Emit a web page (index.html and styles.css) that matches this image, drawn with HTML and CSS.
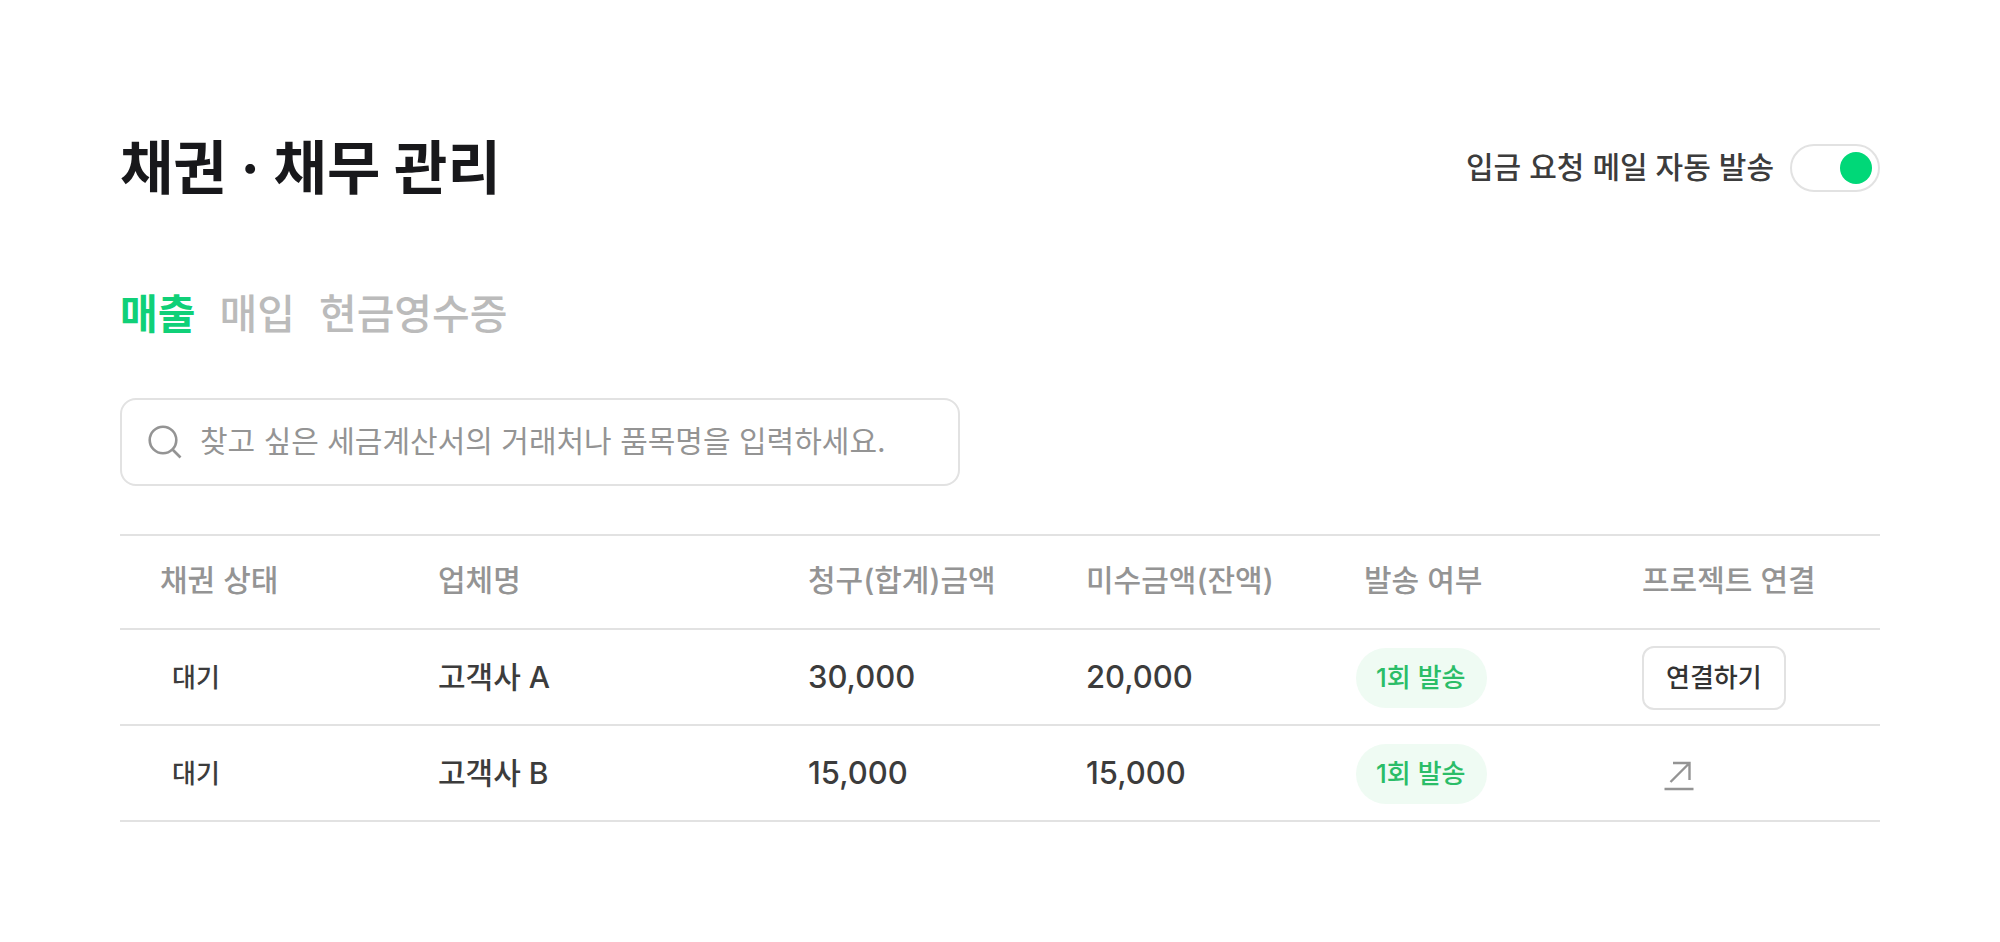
FILE: index.html
```html
<!DOCTYPE html>
<html lang="ko">
<head>
<meta charset="utf-8">
<meta name="viewport" content="width=device-width, initial-scale=1">
<title>채권 · 채무 관리</title>
<link rel="stylesheet" href="styles.css">
</head>
<body>
<main class="page">
  <header class="header">
    <h1 class="title">채권 · 채무 관리</h1>
    <label class="auto-send">
      <span class="auto-send-text">입금 요청 메일 자동 발송</span>
      <input class="switch" type="checkbox" role="switch" checked>
    </label>
  </header>
  <nav class="tabs">
    <button class="tab tab-active" type="button">매출</button>
    <button class="tab" type="button">매입</button>
    <button class="tab" type="button">현금영수증</button>
  </nav>
  <label class="search">
    <svg class="search-icon" viewBox="0 0 34 34" aria-hidden="true"><circle cx="15" cy="15" r="13.3"/><path d="M24.5 24.5l8 8"/></svg>
    <input class="search-input" type="text" aria-label="세금계산서 검색" placeholder="찾고 싶은 세금계산서의 거래처나 품목명을 입력하세요.">
  </label>
  <table class="table">
    <colgroup><col class="col-status"><col class="col-name"><col class="col-amount"><col class="col-amount"><col class="col-amount"><col></colgroup>
    <thead>
      <tr><th>채권 상태</th><th>업체명</th><th>청구(합계)금액</th><th>미수금액(잔액)</th><th>발송 여부</th><th>프로젝트 연결</th></tr>
    </thead>
    <tbody>
      <tr>
        <td class="status">대기</td><td>고객사 A</td><td class="amount">30,000</td><td class="amount">20,000</td>
        <td class="sent"><span class="badge">1회 발송</span></td>
        <td class="link"><button class="connect" type="button">연결하기</button></td>
      </tr>
      <tr>
        <td class="status">대기</td><td>고객사 B</td><td class="amount">15,000</td><td class="amount">15,000</td>
        <td class="sent"><span class="badge">1회 발송</span></td>
        <td><a class="open" href="#" aria-label="프로젝트 열기"><svg class="open-icon" viewBox="0 0 30 30" aria-hidden="true"><path d="M6.5 21L25 2.5M9 2h16.5v17M.5 28h29"/></svg></a></td>
      </tr>
    </tbody>
  </table>
</main>
</body>
</html>
```

FILE: styles.css
```css
* { box-sizing: border-box; }
body {
  margin: 0;
  background: #fff;
  color: #3c3c3c;
  font-family: Inter, "Noto Sans CJK KR", sans-serif;
}
button, input { font: inherit; }
.page { padding: 128px 120px; }
.header { display: flex; align-items: center; justify-content: space-between; }
.title { margin: 0; font-size: 58px; line-height: 80px; font-weight: 700; color: #18181b; }
.auto-send { display: flex; align-items: center; gap: 16px; font-size: 30px; font-weight: 500; line-height: 44px; }
.auto-send-text { padding-bottom: 2px; }
.switch {
  appearance: none;
  display: flex; align-items: center; justify-content: flex-end;
  width: 90px; height: 48px; margin: 0; padding: 0 6px;
  border: 2px solid #e2e2e2; border-radius: 24px;
}
.switch::before { content: ""; width: 32px; height: 32px; border-radius: 50%; background: #00d878; }
.switch:not(:checked) { justify-content: flex-start; }
.switch:not(:checked)::before { background: #bbb; }
.tabs { display: flex; gap: 24px; margin-top: 76px; }
.tab { padding: 0; border: 0; background: none; color: #bbb; font-size: 41px; line-height: 60px; font-weight: 500; }
.tab-active { color: #10d078; font-weight: 700; }
.search {
  display: flex; align-items: center; gap: 18px;
  width: 840px; max-width: 100%; height: 88px; margin-top: 54px; padding: 0 26px;
  border: 2px solid #e2e2e2; border-radius: 16px;
}
.search-icon { flex: none; width: 34px; height: 34px; fill: none; stroke: #949494; stroke-width: 2.6; }
.search-input { flex: 1; min-width: 0; padding: 0 0 2px; border: 0; outline: 0; font-size: 30px; line-height: 44px; color: #3c3c3c; }
.search-input::placeholder { color: #949494; opacity: 1; }
.table { width: 100%; margin-top: 48px; border-collapse: collapse; table-layout: fixed; border-top: 2px solid #e2e2e2; font-size: 30px; line-height: 44px; }
.col-status { width: 278px; }
.col-name { width: 370px; }
.col-amount { width: 278px; }
.table tr { height: 96px; border-bottom: 2px solid #e2e2e2; }
.table thead tr { height: 94px; }
.table th, .table td { padding: 0 0 0 40px; text-align: left; font-weight: 500; white-space: nowrap; }
.table th { padding-bottom: 4px; color: #949494; }
.table .amount { font-size: 31px; }
.table .status { padding-top: 2px; padding-left: 52px; font-size: 26px; }
.table .sent { padding-top: 2px; padding-left: 32px; }
.table .link { padding-top: 2px; }
.badge { display: inline-block; padding: 0 22px 0 20px; border-radius: 30px; background: #effbf3; color: #2bbd68; font-size: 26px; line-height: 60px; vertical-align: middle; }
.connect { height: 64px; padding: 0 22px; border: 2px solid #e2e2e2; border-radius: 12px; background: #fff; color: #333; font-size: 26px; font-weight: 500; line-height: 40px; vertical-align: middle; }
.open { display: inline-block; padding: 0 22px; vertical-align: middle; }
.open-icon { display: block; width: 30px; height: 30px; fill: none; stroke: #949494; stroke-width: 2.4; }
```
